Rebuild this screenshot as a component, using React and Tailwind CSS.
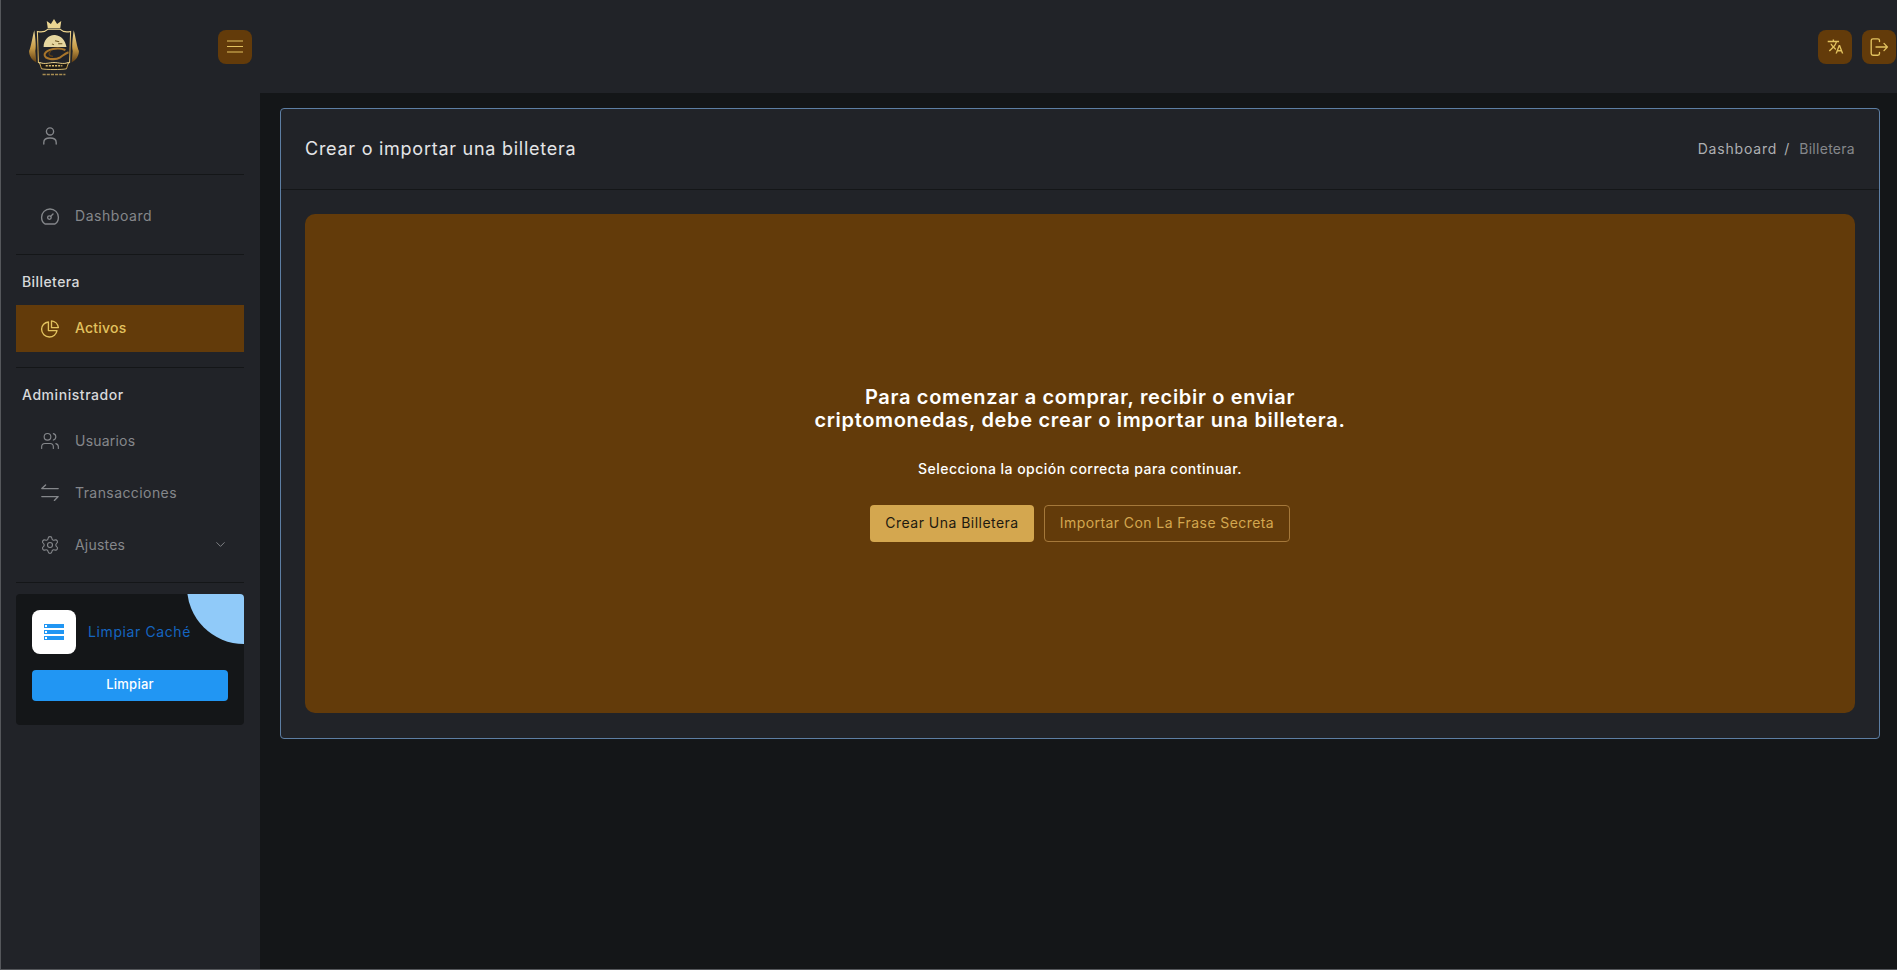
import { ChevronDown, Settings, Users } from 'lucide-react'
import { MdTranslate } from 'react-icons/md'

const font = { fontFamily: 'Inter, "Liberation Sans", sans-serif' }

function Logo() {
  return (
    <svg width="54" height="64" viewBox="0 0 52 60" fill="none">
      <defs>
        <linearGradient id="gold" x1="0" y1="0" x2="0" y2="1">
          <stop offset="0" stopColor="#f3dc96" />
          <stop offset="0.6" stopColor="#c99a3e" />
          <stop offset="1" stopColor="#e6c877" />
        </linearGradient>
        <linearGradient id="leaf" x1="0" y1="0" x2="0" y2="1">
          <stop offset="0" stopColor="#eedb9c" />
          <stop offset="0.55" stopColor="#c79a45" />
          <stop offset="1" stopColor="#5f3d12" />
        </linearGradient>
      </defs>
      {/* crown */}
      <path d="M20 11 L19 4 L23 7 L26 2 L29 7 L33 4 L32 11 Z" fill="#ecd692" />
      {/* wheat */}
      <path d="M7 13 C8 20 9 28 8 33 L9 44 C5 42 2 38 2 33 C4 29 5 20 7 13 Z" fill="url(#leaf)" />
      <path d="M45 13 C44 20 43 28 44 33 L43 44 C47 42 50 38 50 33 C48 29 47 20 45 13 Z" fill="url(#leaf)" />
      {/* frame */}
      <path d="M10 14 C14 15 18 14 20 12 H32 C34 14 38 15 42 14 L41 44 C36 46 16 46 11 44 Z" stroke="url(#gold)" strokeWidth="1" />
      {/* skull */}
      <path d="M16 29 C16 22 21 17 27 17.5 C33 18 37 23 38 29 Z" fill="#e6d69f" />
      <path d="M27 23 L31 24 M30 26 L34 26 M24 26 L26 27" stroke="#6b5420" strokeWidth="1" />
      {/* snake */}
      <path d="M37 32 C30 29 19 31 17 36 C16 41 27 42 32 39 C35 37 37 35 40 34" stroke="#a8752a" strokeWidth="2" />
      <path d="M23 33 C20 35 21 38 25 38" stroke="#5f3f14" strokeWidth="1.2" />
      {/* ribbon */}
      <path d="M12 44 C18 46 21 44 26 44 C31 44 34 46 40 44 L38 50 C33 51 19 51 14 50 Z" fill="#1f1c16" stroke="url(#gold)" strokeWidth="0.9" />
      <path d="M18 47 H34" stroke="#dcbc6b" strokeWidth="1.5" strokeDasharray="2 1" />
      <path d="M15 55.5 H37" stroke="#a88d52" strokeWidth="1.6" strokeDasharray="3 1" />
    </svg>
  )
}

function IconBase({ children, size = 20 }) {
  return (
    <svg width={size} height={size} viewBox="0 0 20 20" fill="none" stroke="currentColor" strokeWidth="1.35" strokeLinecap="round" strokeLinejoin="round">
      {children}
    </svg>
  )
}

const UserIcon = () => (
  <IconBase>
    <circle cx="10" cy="5.4" r="3.6" />
    <path d="M3.8 18 V16.4 C3.8 13.6 6.4 12 10 12 C13.6 12 16.2 13.6 16.2 16.4 V18" />
  </IconBase>
)

const GaugeIcon = () => (
  <IconBase>
    <path d="M5 17 C2.8 15.6 1.6 13 1.6 10.2 C1.6 5.6 5.4 2 10 2 C14.6 2 18.4 5.6 18.4 10.2 C18.4 13 17.2 15.6 15 17 Z" />
    <circle cx="9.4" cy="10.6" r="1.8" />
    <path d="M10.8 9.2 L13 7" />
  </IconBase>
)

const PieIcon = () => (
  <IconBase>
    <path d="M8.4 3 C4.6 3.3 1.6 6.4 1.6 10.3 C1.6 14.6 5.1 18 9.4 18 C13.2 18 16.4 15.2 17 11.6 H8.4 Z" />
    <path d="M11.5 1.8 C15 2.2 17.9 5 18.4 8.6 H11.5 Z" />
  </IconBase>
)

const SwapIcon = () => (
  <IconBase>
    <path d="M18.2 5.6 H1.8 L5.6 2" />
    <path d="M1.8 13.6 H18.2 L14.4 17.4" />
  </IconBase>
)

const LogoutIcon = () => (
  <IconBase>
    <path d="M10.5 4.6 V3.4 C10.5 2.4 9.8 1.8 8.8 1.8 H4 C3 1.8 2.2 2.5 2.2 3.5 V16.5 C2.2 17.5 3 18.2 4 18.2 H8.8 C9.8 18.2 10.5 17.6 10.5 16.6 V15.4" />
    <path d="M7 10 H18.4 M15 6.4 L18.4 10 L15 13.6" />
  </IconBase>
)

function HeaderButton({ children }) {
  return (
    <button className="flex h-[34px] w-[34px] items-center justify-center rounded-lg bg-[#633b0a] text-[#e2c25f]">
      {children}
    </button>
  )
}

function NavItem({ icon, label, active, arrow, raised, tracking = 'tracking-[0.015em]' }) {
  return (
    <div className={`flex h-[47px] items-center pl-[24px] pr-[16px] text-[14px] ${tracking} ${active ? 'bg-[#633b0a] font-medium text-[#e2c25f]' : 'text-[#85878b]'}`}>
      <span className="flex w-[35px] shrink-0">{icon}</span>
      <span className={`flex-1 ${raised ? 'pb-[2px]' : ''}`}>{label}</span>
      {arrow && <ChevronDown size={15} strokeWidth={1.5} />}
    </div>
  )
}

function Sidebar() {
  return (
    <aside className="flex w-[259px] shrink-0 flex-col bg-[#212328] pl-[15px] pr-[16px]">
      <div className="flex h-[82px] items-center border-b border-[#141618] pl-[24px] pt-[5px] text-[#85878b]">
        <UserIcon />
      </div>
      <div className="border-b border-[#141618] pb-[14px] pt-[18px]">
        <NavItem raised icon={<GaugeIcon />} label="Dashboard" tracking="tracking-[0.04em]" />
      </div>
      <div className="border-b border-[#141618] pb-[15px] pt-[17px]">
        <h3 className="mb-[13px] pl-[6px] text-[14px] font-medium leading-[20px] tracking-[0.03em] text-[#d8d9db]">Billetera</h3>
        <NavItem raised active icon={<PieIcon />} label="Activos" />
      </div>
      <div className="border-b border-[#141618] pb-[14px] pt-[17px]">
        <h3 className="mb-[12px] pl-[6px] text-[14px] font-medium leading-[20px] tracking-[0.04em] text-[#d8d9db]">Administrador</h3>
        <div className="flex flex-col gap-[5px]">
          <NavItem icon={<Users size={20} strokeWidth={1.35} />} label="Usuarios" />
          <NavItem icon={<SwapIcon />} label="Transacciones" tracking="tracking-[0.03em]" />
          <NavItem arrow icon={<Settings size={20} strokeWidth={1.35} />} label="Ajustes" />
        </div>
      </div>
      <CacheCard />
    </aside>
  )
}

function CacheCard() {
  return (
    <div className="relative mt-[11px] h-[131px] overflow-hidden rounded bg-[#141618] p-[16px]">
      <div className="absolute right-[-57px] top-[-64px] h-[114px] w-[114px] rounded-full bg-[#90caf9]" />
      <div className="flex items-center gap-[12px]">
        <div className="flex h-[44px] w-[44px] flex-col items-center justify-center gap-[2px] rounded-lg bg-white">
          <ServerBar />
          <ServerBar />
          <ServerBar />
        </div>
        <span className="pb-[2px] text-[14px] tracking-[0.043em] text-[#1565c0]">Limpiar Caché</span>
      </div>
      <button className="mt-[16px] flex h-[31px] w-full items-center justify-center rounded bg-[#2196f3] pb-[2px] text-[13px] font-medium tracking-[0.02em] text-white">
        Limpiar
      </button>
    </div>
  )
}

function ServerBar() {
  return (
    <div className="flex h-[4px] w-[20px] items-center bg-[#2196f3] pl-[1px]">
      <div className="h-[2px] w-[2px] bg-white" />
    </div>
  )
}

function WalletCard() {
  return (
    <section className="flex h-[631px] flex-1 flex-col rounded border border-[#5d7ea3] bg-[#212328]">
      <div className="flex h-[81px] shrink-0 items-center justify-between border-b border-[#141618] px-[24px]">
        <h2 className="pb-[2px] text-[18px] font-normal tracking-[0.041em] text-[#e4e5e7]">Crear o importar una billetera</h2>
        <div className="flex items-center pb-[1px] text-[14px]">
          <span className="tracking-[0.058em] text-[#aeafb2]">Dashboard</span>
          <span className="pl-[7px] pr-[10px] text-[#aeafb2]">/</span>
          <span className="tracking-[0.02em] text-[#85878b]">Billetera</span>
        </div>
      </div>
      <div className="flex-1 p-[24px]">
        <div className="flex h-[499px] flex-col items-center justify-center rounded-[10px] bg-[#633b0a] text-center">
          <h1 className="mt-[1px] text-[20px] font-semibold leading-[23px] tracking-[0.034em] text-white">
            Para comenzar a comprar, recibir o enviar
            <br />
            criptomonedas, debe crear o importar una billetera.
          </h1>
          <p className="mt-[27px] text-[14px] font-medium leading-[20px] tracking-[0.034em] text-white">Selecciona la opción correcta para continuar.</p>
          <div className="mt-[26px] flex gap-[10px]">
            <button className="h-[37px] w-[164px] rounded bg-[#d4a74f] pb-[2px] text-[14px] font-normal tracking-[0.034em] text-[#1e1a10]">Crear Una Billetera</button>
            <button className="h-[37px] w-[246px] rounded border border-[#a5783a] pb-[2px] text-[14px] font-normal tracking-[0.03em] text-[#d4a74f]">Importar Con La Frase Secreta</button>
          </div>
        </div>
      </div>
    </section>
  )
}

export default function App() {
  return (
    <div className="flex h-[970px] flex-col overflow-hidden border-b border-l border-[#55575b] bg-[#141618]" style={font}>
      <header className="flex h-[93px] shrink-0 items-center bg-[#212328] pr-[1px]">
        <div className="ml-[26px] flex w-[191px] items-center pt-[2px]">
          <Logo />
        </div>
        <button className="flex h-[34px] w-[34px] items-center justify-center rounded-lg bg-[#633b0a] text-[#e2c25f]">
          <svg width="16" height="13" viewBox="0 0 16 13" fill="none" stroke="currentColor" strokeWidth="1.2">
            <path d="M0 1 H16 M0 6.5 H16 M0 12 H16" />
          </svg>
        </button>
        <div className="ml-auto flex gap-[10px]">
          <HeaderButton>
            <MdTranslate size={17} />
          </HeaderButton>
          <HeaderButton>
            <LogoutIcon />
          </HeaderButton>
        </div>
      </header>
      <div className="flex min-h-0 flex-1">
        <Sidebar />
        <main className="flex flex-1 items-start pl-[20px] pr-[17px] pt-[15px]">
          <WalletCard />
        </main>
      </div>
    </div>
  )
}
